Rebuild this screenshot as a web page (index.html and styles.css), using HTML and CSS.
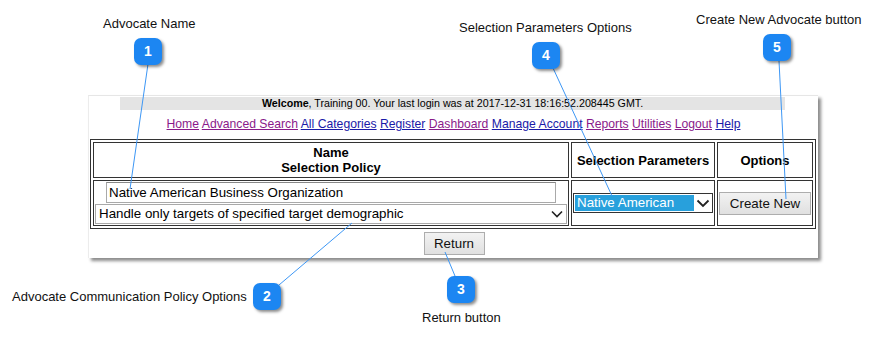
FILE: index.html
```html
<!DOCTYPE html>
<html>
<head>
<meta charset="utf-8">
<link rel="stylesheet" href="styles.css">
</head>
<body>
<div class="page">
  <div class="frame">
    <div class="welcome"><b>Welcome</b>, Training 00. Your last login was at 2017-12-31 18:16:52.208445 GMT.</div>
    <div class="nav">
      <a class="v">Home</a> <a class="v">Advanced Search</a> <a class="u">All Categories</a> <a class="u">Register</a> <a class="v">Dashboard</a> <a class="u">Manage Account</a> <a class="v">Reports</a> <a class="v">Utilities</a> <a class="v">Logout</a> <a class="u">Help</a>
    </div>
    <table class="grid">
      <tr class="head">
        <th class="c1">Name<br>Selection Policy</th>
        <th class="c2">Selection Parameters</th>
        <th class="c3">Options</th>
      </tr>
      <tr class="body">
        <td class="c1">
          <div class="name-input">Native American Business Organization</div>
          <div class="policy-select"><span>Handle only targets of specified target demographic</span><svg class="chev" width="12" height="8" viewBox="0 0 12 8"><path d="M1 1.5 L6 6.5 L11 1.5" fill="none" stroke="#222" stroke-width="1.6"/></svg></div>
        </td>
        <td class="c2">
          <div class="param-select"><span class="sel">Native American</span><span class="arrow"><svg width="14" height="9" viewBox="0 0 14 9"><path d="M1.5 1.5 L7 7 L12.5 1.5" fill="none" stroke="#222" stroke-width="1.8"/></svg></span></div>
        </td>
        <td class="c3"><span class="btn create">Create New</span></td>
      </tr>
    </table>
    <div class="ret-row"><span class="btn ret">Return</span></div>
  </div>

  <svg class="lines" width="875" height="341" viewBox="0 0 875 341">
    <g stroke="#3d97f5" stroke-width="1" fill="none">
      <line x1="148" y1="64" x2="130" y2="189"/>
      <line x1="553" y1="68" x2="612" y2="196"/>
      <line x1="779" y1="61" x2="786" y2="199"/>
      <line x1="279" y1="285" x2="352" y2="223"/>
      <line x1="455" y1="276" x2="445" y2="252"/>
    </g>
  </svg>

  <div class="label l1">Advocate Name</div>
  <div class="label l4">Selection Parameters Options</div>
  <div class="label l5">Create New Advocate button</div>
  <div class="label l2">Advocate Communication Policy Options</div>
  <div class="label l3">Return button</div>

  <div class="badge b1">1</div>
  <div class="badge b2">2</div>
  <div class="badge b3">3</div>
  <div class="badge b4">4</div>
  <div class="badge b5">5</div>
</div>
</body>
</html>
```
FILE: styles.css
```css
html, body {
  margin: 0;
  padding: 0;
  background: #ffffff;
}
body {
  font-family: "Liberation Sans", Arial, sans-serif;
  color: #000;
}
.page {
  position: relative;
  width: 875px;
  height: 341px;
  overflow: hidden;
  padding-top: 95px;
  box-sizing: border-box;
}
.frame {
  margin-left: 88px;
  width: 730px;
  height: 163px;
  box-sizing: border-box;
  border-top: 1px solid #e6e6e6;
  border-left: 1px solid #ececec;
  background: #fff;
  box-shadow: 3px 3px 3px rgba(0,0,0,0.45);
  padding-top: 1px;
}
.welcome {
  margin-left: 31px;
  width: 665px;
  height: 13px;
  background: #e4e4e4;
  font-size: 10.7px;
  line-height: 13px;
  text-align: center;
}
.nav {
  text-align: center;
  font-size: 12.2px;
  line-height: 16px;
  padding-top: 6px;
  height: 22px;
  box-sizing: border-box;
  margin-bottom: 7px;
  margin-top: 0;
}
.nav a {
  text-decoration: underline;
}
.nav a.v { color: #8a1a8a; }
.nav a.u { color: #1a1aa8; }

.grid {
  margin-left: 1px;
  width: 726px;
  border: 1px solid #333;
  border-collapse: separate;
  border-spacing: 2px;
}
.grid th, .grid td {
  border: 1px solid #333;
  padding: 0;
}
.grid th {
  font-size: 13px;
  font-weight: bold;
  line-height: 15px;
  height: 34px;
  text-align: center;
}
.c1 { width: 472px; }
.c2 { width: 142px; }
.c3 { width: 94px; }
.grid td {
  height: 44px;
  text-align: center;
  vertical-align: middle;
}
.grid td.c1 {
  padding: 0 1px;
}
.name-input {
  display: block;
  margin: 0 auto;
  width: 450px;
  height: 21px;
  box-sizing: border-box;
  border: 1px solid #a9a9a9;
  border-top-color: #888;
  font-size: 13.33px;
  line-height: 19px;
  text-align: left;
  padding-left: 2px;
  background: #fff;
}
.policy-select {
  display: flex;
  align-items: center;
  justify-content: space-between;
  margin-top: 1px;
  width: 472px;
  height: 20px;
  box-sizing: border-box;
  border: 1px solid #a9a9a9;
  font-size: 13.33px;
  line-height: 18px;
  text-align: left;
  padding: 0 3px 0 3px;
  background: #fff;
}
.chev { display: block; }
.param-select {
  display: flex;
  margin: 0 auto;
  width: 140px;
  height: 20px;
  box-sizing: border-box;
  border: 1px solid #333;
  font-size: 13.33px;
  line-height: 18px;
  text-align: left;
  background: #fff;
}
.param-select .sel {
  flex: 1;
  background: #28a0dc;
  color: #fff;
  padding-left: 2px;
  margin: 1px 0 1px 1px;
  line-height: 16px;
}
.param-select .arrow {
  width: 18px;
  display: flex;
  align-items: center;
  justify-content: center;
}
.btn {
  display: inline-flex;
  align-items: center;
  justify-content: center;
  box-sizing: border-box;
  border: 1px solid #adadad;
  background: linear-gradient(#f2f2f2, #e0e0e0);
  font-size: 13.33px;
  color: #111;
}
.create {
  width: 92px;
  height: 23px;
}
.ret-row {
  display: flex;
  justify-content: center;
  padding-top: 3px;
  padding-left: 1px;
}
.ret {
  width: 61px;
  height: 23px;
}

.lines {
  position: absolute;
  left: 0;
  top: 0;
  pointer-events: none;
}
.label {
  position: absolute;
  font-size: 13px;
  line-height: 16px;
  white-space: nowrap;
  color: #111;
}
.l1 { left: 103px; top: 16px; }
.l4 { left: 459px; top: 20px; }
.l5 { left: 696px; top: 12px; }
.l2 { left: 12px; top: 289px; }
.l3 { left: 422px; top: 310px; }

.badge {
  position: absolute;
  width: 28px;
  height: 27px;
  border-radius: 7px;
  background: #1c86f2;
  color: #fff;
  font-weight: bold;
  font-size: 14px;
  line-height: 27px;
  text-align: center;
  box-shadow: 2px 2px 3px rgba(0,0,0,0.45);
}
.b1 { left: 134px; top: 38px; }
.b4 { left: 532px; top: 42px; }
.b5 { left: 763px; top: 34px; }
.b2 { left: 253px; top: 283px; }
.b3 { left: 447px; top: 276px; }
```
